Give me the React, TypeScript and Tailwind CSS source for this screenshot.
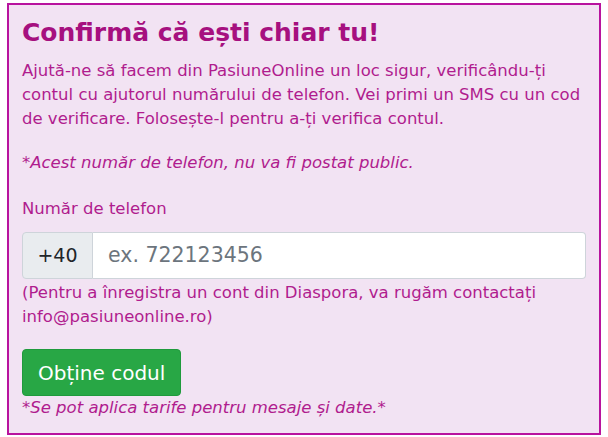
const App = () => {
  return (
    <div className="w-[608px] h-[437px] bg-white pl-[7px] pr-[7px] pt-[3px] pb-[2px] font-['DejaVu_Sans',sans-serif]">
      <div className="h-full border-2 border-[#b8139e] bg-[#f2e3f3] px-[13px] pt-[12px] text-[#b01c8e]">
        <h1 className="text-[25px] font-bold leading-[32px] text-[#a6107f]">Confirmă că ești chiar tu!</h1>
        <p className="mt-[10px] text-[16.5px] leading-[24px]">
          Ajută-ne să facem din PasiuneOnline un loc sigur, verificându-ți contul cu ajutorul numărului de
          telefon. Vei primi un SMS cu un cod de verificare. Folosește-l pentru a-ți verifica contul.
        </p>
        <p className="mt-[20px] text-[16.5px] leading-[24px] italic">*Acest număr de telefon, nu va fi postat public.</p>
        <label className="mt-[22px] block text-[16.5px] leading-[24px]">Număr de telefon</label>
        <div className="mt-[11px] flex h-[47px] w-full">
          <span className="flex w-[71px] items-center justify-center rounded-l-[4px] border border-[#ced4da] bg-[#e9ecef] text-[19px] text-[#212529]">
            +40
          </span>
          <input
            className="min-w-0 flex-1 rounded-r-[4px] border border-l-0 border-[#ced4da] bg-white px-[15px] text-[20.5px] text-[#495057] placeholder-[#6c757d] outline-none"
            placeholder="ex. 722123456"
          />
        </div>
        <p className="mt-[2px] text-[16.5px] leading-[24px]">
          (Pentru a înregistra un cont din Diaspora, va rugăm contactați info@pasiuneonline.ro)
        </p>
        <button className="mt-[20px] block h-[47px] rounded-[4px] border border-[#1f9a3c] bg-[#28a745] px-[15px] text-[20px] text-white">
          Obține codul
        </button>
        <p className="text-[16.5px] leading-[24px] italic">*Se pot aplica tarife pentru mesaje și date.*</p>
      </div>
    </div>
  );
};

export default App;
